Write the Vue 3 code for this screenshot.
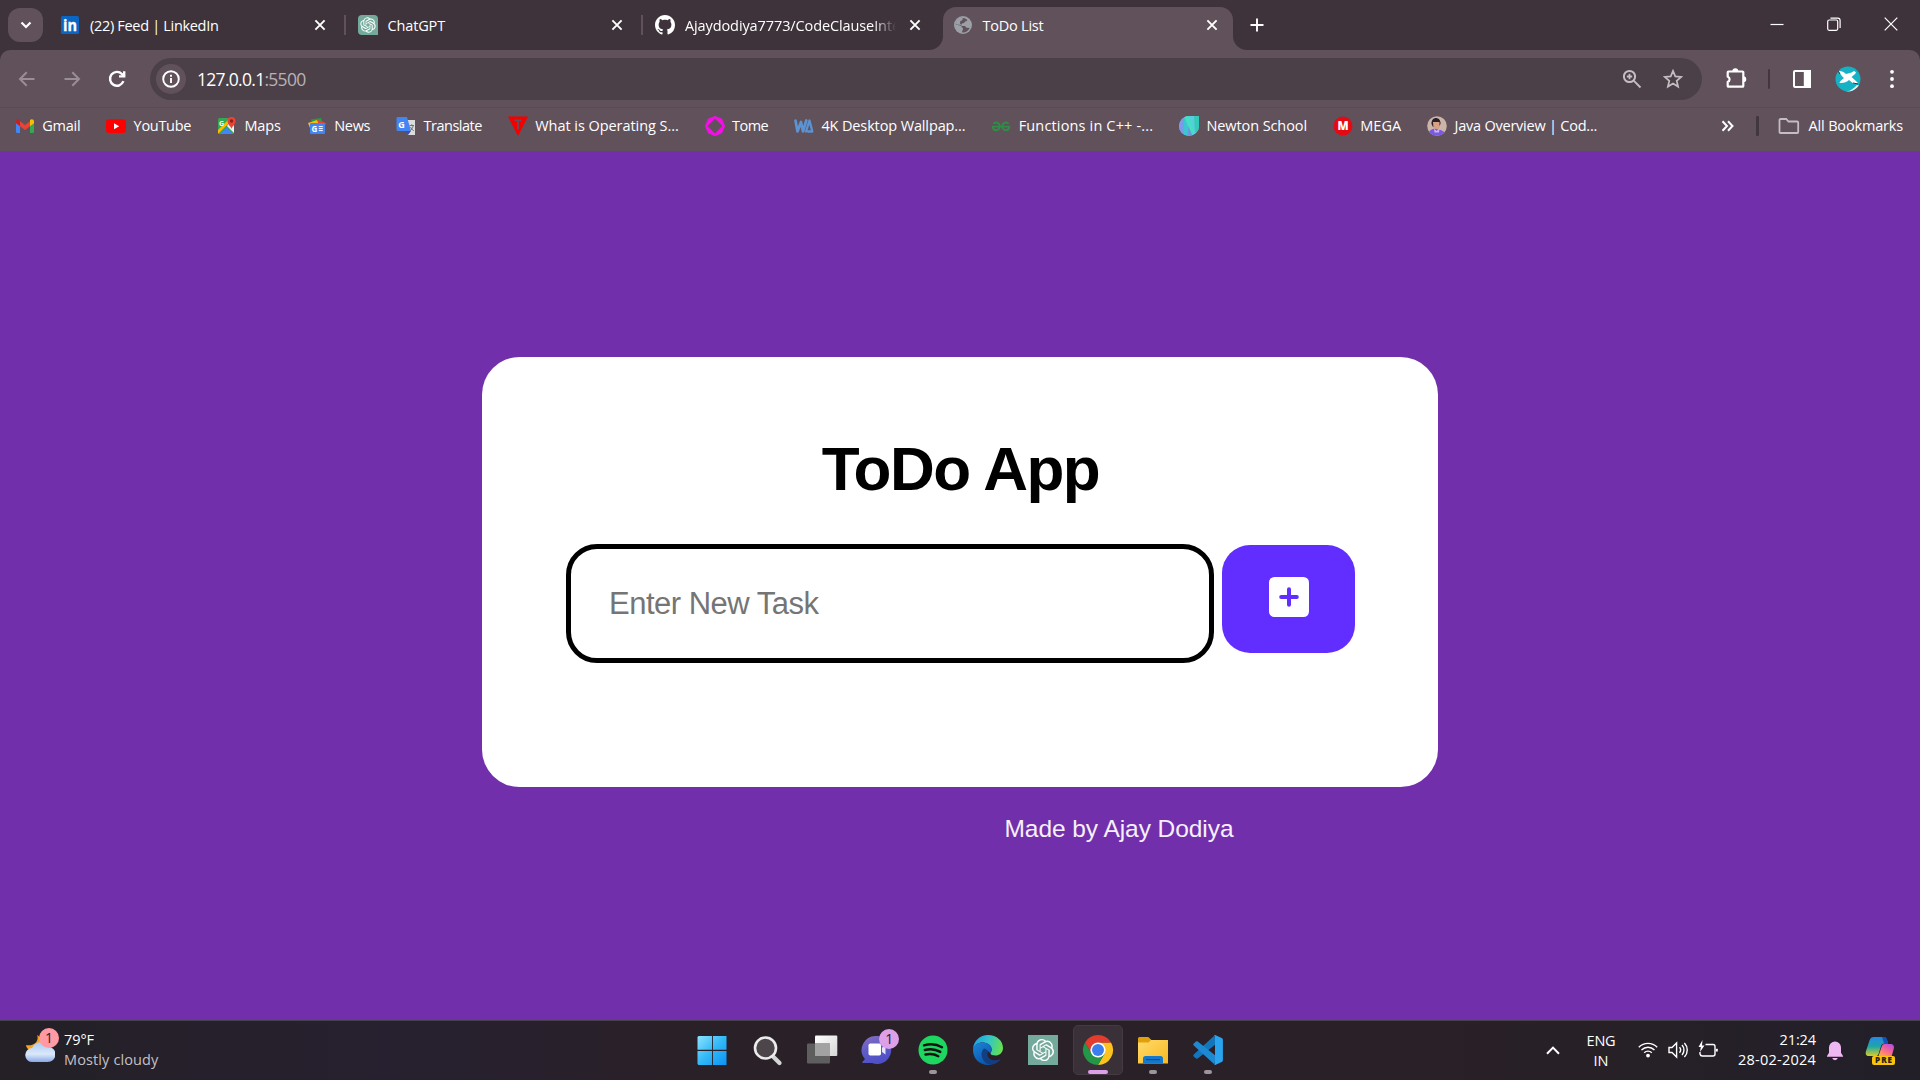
<script setup>
// Spreads or tightens the tracking of a label so that it fills a given width.
const vFit = {
  mounted(el, { value }) {
    if (!value) return
    el.style.letterSpacing = '0px'
    const range = document.createRange()
    range.selectNodeContents(el)
    const natural = range.getBoundingClientRect().width
    el.style.letterSpacing = (value - natural) / el.textContent.length + 'px'
  },
}

const knot =
  'M22.2819 9.8211a5.9847 5.9847 0 0 0-.5157-4.9108 6.0462 6.0462 0 0 0-6.5098-2.9A6.0651 6.0651 0 0 0 4.9807 4.1818a5.9847 5.9847 0 0 0-3.9977 2.9 6.0462 6.0462 0 0 0 .7427 7.0966 5.98 5.98 0 0 0 .511 4.9107 6.051 6.051 0 0 0 6.5146 2.9001A5.9847 5.9847 0 0 0 13.2599 24a6.0557 6.0557 0 0 0 5.7718-4.2058 5.9894 5.9894 0 0 0 3.9977-2.9001 6.0557 6.0557 0 0 0-.7475-7.0729zm-9.022 12.6081a4.4755 4.4755 0 0 1-2.8764-1.0408l.1419-.0804 4.7783-2.7582a.7948.7948 0 0 0 .3927-.6813v-6.7369l2.02 1.1686a.071.071 0 0 1 .038.052v5.5826a4.504 4.504 0 0 1-4.4945 4.4944zm-9.6607-4.1254a4.4708 4.4708 0 0 1-.5346-3.0137l.142.0852 4.783 2.7582a.7712.7712 0 0 0 .7806 0l5.8428-3.3685v2.3324a.0804.0804 0 0 1-.0332.0615L9.74 19.9502a4.4992 4.4992 0 0 1-6.1408-1.6464zM2.3408 7.8956a4.485 4.485 0 0 1 2.3655-1.9728V11.6a.7664.7664 0 0 0 .3879.6765l5.8144 3.3543-2.0201 1.1685a.0757.0757 0 0 1-.071 0l-4.8303-2.7865A4.504 4.504 0 0 1 2.3408 7.872zm16.5963 3.8558L13.1038 8.364 15.1192 7.2a.0757.0757 0 0 1 .071 0l4.8303 2.7913a4.4944 4.4944 0 0 1-.6765 8.1042v-5.6772a.79.79 0 0 0-.407-.667zm2.0107-3.0231l-.142-.0852-4.7735-2.7818a.7759.7759 0 0 0-.7854 0L9.409 9.2297V6.8974a.0662.0662 0 0 1 .0284-.0615l4.8303-2.7866a4.4992 4.4992 0 0 1 6.6802 4.66zM8.3065 12.863l-2.02-1.1638a.0804.0804 0 0 1-.038-.0567V6.0742a4.4992 4.4992 0 0 1 7.3757-3.4537l-.142.0805L8.704 5.459a.7948.7948 0 0 0-.3927.6813zm1.0976-2.3654l2.602-1.4998 2.6069 1.4998v2.9994l-2.5974 1.4997-2.6067-1.4997Z'

// 20 x 20 artwork for tabs and bookmarks
const small = {
  linkedin:
    '<rect x="1" y="1" width="18" height="18" rx="1.5" fill="#0a66c2"/><text x="10" y="15.8" text-anchor="middle" font-family="Open Sans, sans-serif" font-weight="700" font-size="16" textLength="14" lengthAdjust="spacingAndGlyphs" fill="#fff" stroke="#fff" stroke-width=".3">in</text>',
  chatgpt: `<path d="M4 0h12a4 4 0 0 1 4 4v16H4a4 4 0 0 1-4-4V4a4 4 0 0 1 4-4z" fill="#74aa9c"/><path transform="translate(2.3 2.3) scale(.642)" d="${knot}" fill="#fff"/>`,
  github:
    '<path transform="scale(1.25)" fill="#fff" d="M8 0C3.58 0 0 3.58 0 8c0 3.54 2.29 6.53 5.47 7.59.4.07.55-.17.55-.38 0-.19-.01-.82-.01-1.49-2.01.37-2.53-.49-2.69-.94-.09-.23-.48-.94-.82-1.13-.28-.15-.68-.52-.01-.53.63-.01 1.08.58 1.23.82.72 1.21 1.87.87 2.33.66.07-.52.28-.87.51-1.07-1.78-.2-3.64-.89-3.64-3.95 0-.87.31-1.59.82-2.15-.08-.2-.36-1.02.08-2.12 0 0 .67-.21 2.2.82.64-.18 1.32-.27 2-.27s1.36.09 2 .27c1.53-1.04 2.2-.82 2.2-.82.44 1.1.16 1.92.08 2.12.51.56.82 1.27.82 2.15 0 3.07-1.87 3.75-3.65 3.95.29.25.54.73.54 1.48 0 1.07-.01 1.93-.01 2.2 0 .21.15.46.55.38A8.01 8.01 0 0 0 16 8c0-4.42-3.58-8-8-8z"/>',
  globe:
    '<circle cx="10" cy="10" r="9" fill="#9aa0a6"/><path d="M8.2 2.8a7.4 7.4 0 0 0-5.6 6.6l4.4 1c1.5.2 1.7 1.2 1.9 2 .9.3 1.3.9 1.1 1.9l-1.2 3c3.6.5 6.6-1.5 7.9-4.4l-2.9-.1c-.9 0-1.4-.8-1.4-1.7l-3.9-.2c-.7-1.3.2-2.5 1.3-2.7l1.5-.3c.3-1.1 1-1.7 2.2-1.6l.9-1.3c-1.7-1.5-3.8-2.2-6.2-2.2z" fill="#61515b"/><path d="M8.4 2.5c1.5.1 1.9 1.8.7 2.7l-1.7.9-.5 2.1 1.3 1.8-4.9-.6-.9-1.7c.9-2.6 3.2-5 6-5.2z" fill="#9aa0a6"/>',
  gmail:
    '<path d="M1 5v10.500A1.300 1.300 0 0 0 2.300 17H5V8z" fill="#4285f4"/><path d="M19 5v10.500a1.300 1.300 0 0 1-1.300 1.500H15V8z" fill="#34a853"/><path d="M5 5.300l5 3.800 5-3.800v4.900l-5 3.800-5-3.800z" fill="#ea4335"/><path d="M1 5.500C1 3.400 3.300 2.700 4.700 3.800L5 4v6.200L1 7.200z" fill="#c5221f"/><path d="M19 5.500c0-2.100-2.300-2.800-3.700-1.700L15 4v6.200l4-3z" fill="#fbbc04"/>',
  youtube: '<rect y="3.300" width="20" height="13.700" rx="3" fill="#f00"/><path d="M8 7.200v6l5.200-3z" fill="#fff"/>',
  maps:
    '<clipPath id="mp"><rect x="1" y="2" width="16" height="16" rx="1.500"/></clipPath><g clip-path="url(#mp)"><path d="M1 2h16v16H1z" fill="#34a853"/><path d="M1 14 13 2h4L1 18z" fill="#fbbc04"/><path d="M10 10 17 17V8l-4-2z" fill="#f1f3f4"/><path d="M3 18 9.500 11.500 16 18z" fill="#4285f4"/></g><path d="M14.500 13c-.5-3-4-4-4-8a4 4 0 0 1 8 0c0 4-3.500 5-4 8z" fill="#ea4335"/><circle cx="14.500" cy="5" r="1.700" fill="#8c1f17"/><text x="2" y="9.500" font-family="Open Sans, sans-serif" font-size="7" font-weight="700" fill="#fff">G</text>',
  news:
    '<path d="M4 3.500 14 2l2 5H5z" fill="#1e9e4a"/><path d="M1 7l9-3 2 5-9 3z" fill="#fbbc04"/><path d="M11 4l8 3-2 5-6-2z" fill="#ea4335"/><rect x="3" y="7" width="15" height="11" rx="1.200" fill="#4285f4"/><text x="4.500" y="15.600" font-family="Open Sans, sans-serif" font-size="8" font-weight="700" fill="#fff">G</text><path d="M11.800 10.600h4M11.800 12.600h4M11.800 14.600h4" stroke="#fff" stroke-width="1"/>',
  translate:
    '<path d="M8 4h11v15H12z" fill="#dcdcdc"/><path d="M1.500 1H11l4 14H2a1.500 1.500 0 0 1-1.500-1.500v-11A1.500 1.500 0 0 1 1.500 1z" fill="#4285f4"/><path d="M9.500 15H15l-3 4z" fill="#2b52c0"/><text x="2.300" y="11.500" font-family="Open Sans, sans-serif" font-size="9" font-weight="700" fill="#fff">G</text><path d="M13.500 9.500h4.500M15.700 8.300v1.200M17.200 9.700c-.4 2.200-1.700 4-3 5M14.500 11c.7 1.700 2 3 3.300 3.800" stroke="#6d767e" stroke-width="1" fill="none"/>',
  tutor: '<path d="M0 .5h20L10 20z" fill="#f40000"/><path d="M6.500 4.300h7M10 4.300v9" stroke="#61515b" stroke-width="1.800"/>',
  tome:
    '<path d="M10 .6 16.600 3.400 19.400 10 16.600 16.600 10 19.400 3.400 16.600.6 10 3.400 3.400z" fill="#f40fe6" stroke="#f40fe6" stroke-width="1.200" stroke-linejoin="round"/><path d="M10 2.600 17.400 10 10 17.400 2.600 10z" fill="#61515b"/>',
  wallpaper:
    '<path d="M1.500 4.500 3.500 15.500 7 6l2 9.500L12.300 4.500" fill="none" stroke="#5b93d3" stroke-width="2.700" stroke-linejoin="round" stroke-linecap="round"/><path d="M12 15.500 15.500 4.500 18.300 15.500H14" fill="none" stroke="#5b93d3" stroke-width="2.300" stroke-linejoin="round" stroke-linecap="round"/>',
  geeks:
    '<path d="M2.600 8C3.500 5.600 8.600 5.800 8.600 10.300c0 5.200-6.600 5.200-6.800.3h16.400c-.2 4.900-6.800 4.900-6.800-.3 0-4.500 5.100-4.700 6-2.300" fill="none" stroke="#2f8d46" stroke-width="1.900"/>',
  newton:
    '<clipPath id="nw"><path d="M10 0h10v10A10 10 0 1 1 10 0z"/></clipPath><g clip-path="url(#nw)"><path d="M0 0h20v20H0z" fill="#5bcbe0"/><path d="M0 0h5v20H0z" fill="#7b9bea"/><path d="M5 0h4.500v20H5z" fill="#3ec5d2"/><path d="M5 0h5l6 18h-4z" fill="#43e0c2"/><path d="M9.500 10l4 10h-5z" fill="#6899df"/><path d="M15 0h5v16h-4z" fill="#35c9b8"/></g>',
  mega:
    '<circle cx="10" cy="10" r="9.500" fill="#e50914"/><text x="10" y="14" text-anchor="middle" font-family="Open Sans, sans-serif" font-size="11.500" font-weight="800" fill="#fff">M</text>',
  java:
    '<clipPath id="jv"><circle cx="10" cy="10" r="9.800"/></clipPath><g clip-path="url(#jv)"><path d="M0 0h20v20H0z" fill="#cdb4a8"/><path d="M4.500 8C4 0 14 0 13.500 8l-2 3H6z" fill="#2a2028"/><path d="M6 6h6.500v6l-3 2-3-2z" fill="#d9a083"/><path d="M1 20c0-5 4-8 8-7s9 1 10 7z" fill="#7a5ae0"/><path d="M7 12.500l2.500 2.500 3-2.500-.5 4H7.500z" fill="#c9b7f2"/></g>',
}

// 32 x 32 artwork for the taskbar
const large = {
  windows:
    '<defs><linearGradient id="wg" x1="0" y1="0" x2="1" y2="1"><stop offset="0" stop-color="#8be3ff"/><stop offset=".5" stop-color="#33b8f7"/><stop offset="1" stop-color="#0a93f5"/></linearGradient></defs><path d="M2.500 2h13.600v13.800H1.500V3zM17 2h13.500v13.800H17zM1.500 17h14.600v14H2.500l-1-1zM17 17h13.500v14H17z" fill="url(#wg)"/>',
  search:
    '<path d="M22 22.500 28.500 29" stroke="#d3d6d7" stroke-width="4.200" stroke-linecap="round"/><circle cx="14.500" cy="14" r="10.500" fill="#4c464b" stroke="#ececec" stroke-width="2.600"/>',
  taskview:
    '<defs><linearGradient id="tv" x1="0" y1="0" x2="1" y2="1"><stop offset="0" stop-color="#fff"/><stop offset="1" stop-color="#d6d6d6"/></linearGradient></defs><rect x="9" y="1.500" width="22.300" height="20.500" rx="1" fill="url(#tv)"/><rect x="1" y="9.500" width="23" height="20" rx="1" fill="#5e5e5e"/><path d="M9 9.500h15V22H9z" fill="#a2a2a2"/>',
  chat:
    '<defs><linearGradient id="cg" x1="0" y1="0" x2=".4" y2="1"><stop offset="0" stop-color="#8d6fc0"/><stop offset=".5" stop-color="#5f5cc6"/><stop offset="1" stop-color="#4f50c8"/></linearGradient></defs><path d="M16 2a14 14 0 1 1-5 27H2c-.8 0-.9-.8-.4-1.300L4 25A14 14 0 0 1 16 2z" fill="url(#cg)"/><rect x="7.500" y="9.500" width="12.500" height="12" rx="1.800" fill="#fff"/><path d="M21 13.800l3.500-2.800v9.600L21 18z" fill="#e6e4fb"/>',
  spotify:
    '<circle cx="16" cy="16" r="14.500" fill="#1ed760"/><path d="M7 11.300c6-1.700 13-1 18 1.900M7.800 16c5.200-1.400 11-.8 15.500 1.900M8.500 20.500c4.400-1 9-.5 12.800 1.700" fill="none" stroke="#111" stroke-width="2.400" stroke-linecap="round"/>',
  edge:
    '<defs><linearGradient id="e1" x1="0" y1=".3" x2="1" y2=".5"><stop offset="0" stop-color="#1f9fe4"/><stop offset=".5" stop-color="#32c5c9"/><stop offset="1" stop-color="#66e14d"/></linearGradient><linearGradient id="e2" x1="0" y1="0" x2=".6" y2="1"><stop offset="0" stop-color="#1b86d8"/><stop offset="1" stop-color="#0b55ab"/></linearGradient></defs><path d="M1 15C1.500 7 8 1 16 1c9 0 15 6 15 13 0 5-4 7.500-7.500 7.500-3 0-5-1-5-2.300 0-.9 1.200-1.300 1.200-3.700C19.700 11 15 8.500 10 8.500 6 8.500 2.500 11 1 15z" fill="url(#e1)"/><path d="M1 16c0-5 5-7.500 9.500-7.500 5 0 9.200 2.700 9.200 7 0 2.400-1.300 2.600-1.300 3.700-3-4-7.900-1.700-7.900 2.800 0 5 5.500 8.500 9.500 8.500-1.300.4-2.600.5-4 .5C7.500 31 1 24.500 1 16z" fill="url(#e2)"/><path d="M12 14.500c-5 4.500-2 13 5 16 4.500.8 9.500-2 11.700-5.500-5 2.500-12.300 1.500-13.200-4-.2-2 .7-3 1-3.500-1.500-1.700-3-2.700-4.500-3z" fill="#123f83"/>',
  chatgpt: `<path d="M1 1h30v30H1z" fill="#74aa9c"/><path transform="translate(4.900 4.900) scale(.925)" d="${knot}" fill="#fff"/>`,
  chrome:
    '<path d="M16 8.500h13A15 15 0 0 1 16 31l6.500-11.300z" fill="#fcc31e"/><path d="M16 8.500h13A15 15 0 0 0 3 8.500L9.500 19.700z" fill="#e33b2e"/><path d="M9.500 19.700 3 8.500A15 15 0 0 0 16 31l6.500-11.300z" fill="#239647"/><circle cx="16" cy="16" r="7.600" fill="#fff"/><circle cx="16" cy="16" r="6" fill="#3d7eee"/>',
  explorer:
    '<defs><linearGradient id="fg" x1="0" y1="0" x2="1" y2="1"><stop offset="0" stop-color="#ffdb6b"/><stop offset="1" stop-color="#f9b821"/></linearGradient></defs><path d="M1 4.500A1.500 1.500 0 0 1 2.500 3h8.800L14.500 6H31v7H1z" fill="#e0a00e"/><path d="M1 8.500h10.500L14 6h17v23.500H1z" fill="url(#fg)"/><path d="M6 29.500v-5A2.500 2.500 0 0 1 8.500 22h15a2.500 2.500 0 0 1 2.500 2.500v5z" fill="#1479cc"/><path d="M9 25.600h14" stroke="#0b4f92" stroke-width="1.200"/>',
  vscode:
    '<path d="M22.500 1.500 2 20.300c-1 1-.9 1.700 0 2.500l1.700 1.500c.7.600 1.500.5 2 .1L24 10z" fill="#1276bd"/><path d="M22.500 30.500 2 11.700c-1-1-.9-1.700 0-2.500l1.700-1.500c.7-.6 1.500-.5 2-.1L24 22z" fill="#1e89d0"/><path d="M22 30.800c.7.300 1.200.2 1.700 0l6-2.900c.8-.4 1.200-1 1.200-1.700V5.800c0-.8-.4-1.400-1.200-1.700l-6-2.900c-.8-.3-1.400-.1-2 .3.800-.3 1.300.2 1.300 1.200v26.600c0 1-.5 1.500-1 1.500z" fill="#2ba4ef"/>',
}

const tabs = [
  { icon: 'linkedin', title: '(22) Feed | LinkedIn', w: 128.5 },
  { icon: 'chatgpt', title: 'ChatGPT', w: 57.5 },
  { icon: 'github', title: 'Ajaydodiya7773/CodeClauseInte', w: 215, faded: true },
  { icon: 'globe', title: 'ToDo List', w: 61, active: true },
]

const bookmarks = [
  { icon: 'gmail', title: 'Gmail', w: 38 },
  { icon: 'youtube', title: 'YouTube', w: 57.5 },
  { icon: 'maps', title: 'Maps', w: 36.5 },
  { icon: 'news', title: 'News', w: 36 },
  { icon: 'translate', title: 'Translate', w: 58.5 },
  { icon: 'tutor', title: 'What is Operating S...', w: 143.5 },
  { icon: 'tome', title: 'Tome', w: 36 },
  { icon: 'wallpaper', title: '4K Desktop Wallpap...', w: 144 },
  { icon: 'geeks', title: 'Functions in C++ -...', w: 134.5 },
  { icon: 'newton', title: 'Newton School', w: 100.5 },
  { icon: 'mega', title: 'MEGA', w: 41 },
  { icon: 'java', title: 'Java Overview | Cod...', w: 142.5 },
]

const apps = [
  { icon: 'windows' },
  { icon: 'search' },
  { icon: 'taskview' },
  { icon: 'chat', badge: '1' },
  { icon: 'spotify', running: true },
  { icon: 'edge' },
  { icon: 'chatgpt' },
  { icon: 'chrome', active: true },
  { icon: 'explorer', running: true },
  { icon: 'vscode', running: true },
]
</script>

<template>
  <div class="screen">
    <header class="tabstrip">
      <button class="tab-search">
        <svg width="12" height="8" viewBox="0 0 12 8"><path d="M1.500 1.500 6 6l4.500-4.500" /></svg>
      </button>
      <div class="tabs">
        <div v-for="t in tabs" :key="t.title" class="tab" :class="{ active: t.active }">
          <svg class="fav" viewBox="0 0 20 20" v-html="small[t.icon]" />
          <span class="tab-title" :class="{ faded: t.faded }"><span v-fit="t.w">{{ t.title }}</span></span>
          <svg class="tab-close" viewBox="0 0 12 12"><path d="M1.400 1.400l9.200 9.200M10.600 1.400l-9.200 9.200" /></svg>
        </div>
      </div>
      <svg class="new-tab" viewBox="0 0 14 14"><path d="M7 .5v13M.5 7h13" /></svg>
      <div class="window-controls">
        <svg viewBox="0 0 14 14"><path d="M.5 7.500h13" /></svg>
        <svg viewBox="0 0 14 14">
          <rect x=".7" y="3" width="10" height="10.300" rx="1.500" />
          <path d="M3.500 1.200h7.300a2.300 2.300 0 0 1 2.300 2.300V11" />
        </svg>
        <svg viewBox="0 0 14 14"><path d="M.7.7l12.600 12.600M13.300.7.7 13.300" /></svg>
      </div>
    </header>

    <div class="chrome-body">
      <nav class="toolbar">
        <svg class="nav dim" viewBox="0 0 20 20"><path d="M17.500 10h-14M9.700 3.200 3 10l6.700 6.800" /></svg>
        <svg class="nav dim" viewBox="0 0 20 20"><path d="M2.500 10h14M10.300 3.200 17 10l-6.700 6.800" /></svg>
        <svg class="nav reload" viewBox="0 0 20 20">
          <path d="M16.400 12.200A6.900 6.900 0 1 1 14.900 5l1.500 1.500" />
          <path d="M17.200 2.200v5.200H12" />
        </svg>
        <div class="omnibox">
          <span class="info">
            <svg viewBox="0 0 18 18">
              <circle cx="9" cy="9" r="7.800" /><path d="M9 8v5" /><path d="M9 4.700v2" />
            </svg>
          </span>
          <span v-fit="108.5" class="url">127.0.0.1<span class="port">:5500</span></span>
          <svg class="zoomed" viewBox="0 0 20 20">
            <circle cx="7.500" cy="7.500" r="5.600" /><path d="M11.700 11.700 18.500 18.500M7.500 4.800v5.400M4.800 7.500h5.400" />
          </svg>
          <svg class="star" viewBox="0 0 20 20">
            <path d="M10 1.900l2.300 5.500 5.900.5-4.500 3.900 1.400 5.800-5.100-3.100-5.100 3.100 1.400-5.800L1.800 7.900l5.900-.5z" />
          </svg>
        </div>
        <svg class="ext" viewBox="0 0 22 22">
          <path d="M3.500 4.500h14a.8.8 0 0 1 .8.800v13.600a.8.8 0 0 1-.8.800h-14a.8.8 0 0 1-.8-.8v-4.200a2.600 2.600 0 0 0 0-5V5.300a.8.8 0 0 1 .8-.8z" />
          <path class="solid" d="M7.300 4.300a3 3 0 0 1 6 0zM18.300 9.200a3 3 0 0 1 0 6z" />
        </svg>
        <span class="divider thin" />
        <svg class="panel" viewBox="0 0 18 18">
          <rect x="1" y="1" width="16" height="16" rx="1" /><path d="M11.800 1H17v16h-5.200z" />
        </svg>
        <svg class="avatar" viewBox="0 0 26 26">
          <clipPath id="av"><circle cx="13" cy="13" r="12.500" /></clipPath>
          <g clip-path="url(#av)">
            <path d="M0 0h26v26H0z" fill="#15b2c6" />
            <path d="M10 26c6-1 9-4 12-7l4 1v6z" fill="#eaf6f4" />
            <path d="M4 5c3 .3 5 1 7 3 2.500-.5 5.500-1 8-3 1 .4 1.500 1 2 1.500-1 2-3 3.300-4.500 4.500 2 1.500 4 3.500 6.500 6-2 1-4 1-6-.5l-3-2.500c-2 2-6 3.500-9.500 3 0-2 2.500-3 4.500-5C7 10.500 5 8 4 5z" fill="#fff" />
            <path d="M3 5l2 3M18 17l5 1" stroke="#333" stroke-width="1" />
          </g>
        </svg>
        <svg class="dots" viewBox="0 0 4 20">
          <circle cx="2" cy="2.800" r="1.900" /><circle cx="2" cy="10" r="1.900" /><circle cx="2" cy="17.200" r="1.900" />
        </svg>
      </nav>

      <nav class="bookmarks">
        <div v-for="b in bookmarks" :key="b.title" class="bookmark">
          <svg class="fav" viewBox="0 0 20 20" v-html="small[b.icon]" />
          <span class="label" :style="{ width: b.w + 'px' }"><span v-fit="b.w">{{ b.title }}</span></span>
        </div>
        <svg class="more" viewBox="0 0 13 12"><path d="M1.500 1.200 6 6l-4.500 4.800M7 1.200 11.500 6 7 10.800" /></svg>
        <span class="divider" />
        <svg class="folder" viewBox="0 0 22 18">
          <path d="M2.500 2h5.700l2.300 2.500h8.700a1 1 0 0 1 1 1V15a1 1 0 0 1-1 1H2.500a1 1 0 0 1-1-1V3a1 1 0 0 1 1-1z" />
        </svg>
        <span class="all"><span v-fit="94.5">All Bookmarks</span></span>
      </nav>
    </div>

    <main class="page">
      <section class="card">
        <h1><span v-fit="277.5">ToDo App</span></h1>
        <div class="entry">
          <input type="text" placeholder="Enter New Task" />
          <button class="add">
            <svg viewBox="0 0 40 40">
              <rect width="40" height="40" rx="5.500" fill="#fff" />
              <path d="M20 12.200v15.600M12.200 20h15.600" stroke="#612eff" stroke-width="4" stroke-linecap="round" />
            </svg>
          </button>
        </div>
      </section>
      <p class="credit"><span v-fit="229">Made by Ajay Dodiya</span></p>
    </main>

    <footer class="taskbar">
      <div class="weather">
        <svg viewBox="0 4 32 32">
          <defs>
            <linearGradient id="cl" x1="0" y1="0" x2="0" y2="1">
              <stop offset="0" stop-color="#a9cbf5" /><stop offset=".6" stop-color="#dce8fa" /><stop offset="1" stop-color="#86a9e6" />
            </linearGradient>
          </defs>
          <path d="M13 6c2 6-2 12-12 11 1 5 6 7 12 5 6-3 7-12 0-16z" fill="#f5a21b" />
          <path d="M8 35a7.500 7.500 0 0 1-.5-15 9.500 9.500 0 0 1 17-1.500A8 8 0 0 1 24 35z" fill="url(#cl)" />
        </svg>
        <span class="badge pink">1</span>
        <div class="weather-text">
          <span class="temp"><span v-fit="30">79°F</span></span>
          <span class="sky"><span v-fit="94.5">Mostly cloudy</span></span>
        </div>
      </div>

      <div class="apps">
        <div v-for="(a, i) in apps" :key="i" class="app" :class="{ active: a.active }">
          <svg viewBox="0 0 32 32" v-html="large[a.icon]" />
          <span v-if="a.badge" class="badge lilac">{{ a.badge }}</span>
          <span v-if="a.running || a.active" class="indicator" />
        </div>
      </div>

      <div class="tray">
        <svg class="up" viewBox="0 0 14 9"><path d="M1 7.800 7 1.600l6 6.200" /></svg>
        <div class="lang"><span v-fit="29">ENG</span><span v-fit="15">IN</span></div>
        <svg class="sys" viewBox="0 0 20 20">
          <path d="M.8 7.200c5.200-5.100 13.200-5.100 18.400 0M3.500 10c3.700-3.700 9.300-3.700 13 0M6.200 12.800c2.200-2.200 5.400-2.200 7.600 0" />
          <circle cx="10" cy="15.600" r="1.900" class="solid" />
        </svg>
        <svg class="sys" viewBox="0 0 20 20">
          <path d="M1 7.500h3L8.600 3v14L4 12.500H1z" /><path d="M11.500 7.300c1.300 1.500 1.300 3.900 0 5.400M14 5c2.600 2.800 2.600 7.200 0 10M16.400 2.900c3.800 4 3.800 10.200 0 14.200" />
        </svg>
        <svg class="sys" viewBox="0 0 20 20">
          <path d="M7.500 4.500H15A2 2 0 0 1 17 6.500V14a2 2 0 0 1-2 2H4.500A2.500 2.500 0 0 1 2 14v-2" />
          <path d="M18.800 8.800v2.700" stroke-width="2" /><path class="solid" d="M4.500 0 .5 7h2.300L2 12 6.500 5.500H4z" />
        </svg>
        <div class="clock"><span v-fit="36.500">21:24</span><span v-fit="78">28-02-2024</span></div>
        <svg class="bell" viewBox="0 0 18 20">
          <path d="M9 .5a6 6 0 0 1 6 6v5.200l2 3.300v.8H1V15l2-3.300V6.500a6 6 0 0 1 6-6zM6.200 17h5.600a2.900 2.900 0 0 1-5.600 0z" />
        </svg>
        <svg class="copilot" viewBox="0 0 30 30">
          <defs>
            <linearGradient id="ca" x1="0" y1="0" x2="0" y2="1">
              <stop offset="0" stop-color="#2488e8" /><stop offset=".5" stop-color="#1fa6a5" /><stop offset="1" stop-color="#d9cc28" />
            </linearGradient>
            <linearGradient id="cb" x1="1" y1="0" x2=".3" y2="1">
              <stop offset="0" stop-color="#a64df0" /><stop offset=".5" stop-color="#f0609b" /><stop offset="1" stop-color="#ff9d5c" />
            </linearGradient>
          </defs>
          <path d="M9 1h9c2.500 0 3.500 1.500 4.300 4l.7 2.500h-3.500c-2 0-3 1-3.500 2.700L13.500 18c-.5 1.500-1.300 2-3 2H4c-3 0-3.800-2-3-5L4.500 4.500C5.300 2 6.500 1 9 1z" fill="url(#ca)" />
          <path d="M17 1h2c2 0 2.800 1.500 3.500 4l.7 2.500h-4z" fill="#1452b8" />
          <path d="M19.500 8H25c3.500 0 4.500 2 3.700 5l-2 7H13.500l3-9c.6-2 1.500-3 3-3z" fill="url(#cb)" />
          <rect x="7" y="20" width="23" height="9" rx="2" fill="#fcc30b" />
          <text x="18.500" y="27.400" text-anchor="middle" font-family="Open Sans, sans-serif" font-size="8" font-weight="800" fill="#222" textLength="17">PRE</text>
        </svg>
      </div>
    </footer>
  </div>
</template>

<style>
body {
  margin: 0;
  overflow: hidden;
}
</style>

<style scoped>
.screen {
  width: 1920px;
  height: 1080px;
  display: flex;
  flex-direction: column;
  overflow: hidden;
  background: #3e333a;
  color: #fff;
  font-family: "Open Sans", "Noto Sans", sans-serif;
  font-size: 14.5px;
  line-height: 20px;
}
svg {
  display: block;
  flex: none;
  fill: none;
}
button {
  border: 0;
  padding: 0;
  display: flex;
  align-items: center;
  justify-content: center;
}

/* tab strip */
.tabstrip {
  height: 50px;
  display: flex;
  flex: none;
}
.tab-search {
  width: 35px;
  height: 34px;
  margin: 8px 3px 0 8px;
  border-radius: 12px;
  background: #61515b;
}
.tab-search path {
  stroke: #fff;
  stroke-width: 2.2;
}
.tabs {
  display: flex;
}
.tab {
  box-sizing: border-box;
  width: 297.5px;
  height: 50px;
  padding: 0 0 0 14px;
  display: flex;
  align-items: center;
  position: relative;
}
.tab + .tab:not(.active)::before {
  content: "";
  position: absolute;
  left: 0;
  top: 15px;
  width: 2px;
  height: 20px;
  background: #61515b;
}
.tab.active {
  z-index: 0;
}
.tab.active::before {
  content: "";
  position: absolute;
  z-index: -1;
  left: 4.5px;
  right: 3px;
  top: 7px;
  bottom: 0;
  border-radius: 13px 13px 0 0;
  background: #61515b;
}
.tab.active::after {
  content: "";
  position: absolute;
  z-index: -1;
  left: -10px;
  right: -11px;
  bottom: 0;
  height: 14px;
  background:
    radial-gradient(circle at 0 0, transparent 13.5px, #61515b 14.5px) left / 14.5px 14px no-repeat,
    radial-gradient(circle at 100% 0, transparent 13.5px, #61515b 14.5px) right / 14px 14px no-repeat;
}
.fav {
  width: 20px;
  height: 20px;
}
.tab-title {
  width: 216px;
  height: 20px;
  padding-top: 1px;
  margin-left: 10px;
  white-space: nowrap;
}
.tab-title.faded {
  -webkit-mask-image: linear-gradient(90deg, #000 188px, transparent 211px);
  mask-image: linear-gradient(90deg, #000 188px, transparent 211px);
}
.tab-close {
  width: 12px;
  height: 12px;
  margin-left: 7.5px;
}
.tab-close path,
.new-tab path {
  stroke: #fff;
  stroke-width: 1.9;
}
.new-tab {
  width: 14px;
  height: 14px;
  margin: 18px 0 0 14px;
}
.window-controls {
  display: flex;
  gap: 43px;
  margin: 17px 22px 0 auto;
}
.window-controls svg {
  width: 14px;
  height: 14px;
  stroke: #fff;
  stroke-width: 1.2;
}

/* toolbar */
.chrome-body {
  flex: none;
  height: 101px;
  background: #61515b;
  border-radius: 10px 10px 0 0;
}
.toolbar {
  height: 58px;
  box-sizing: border-box;
  border-bottom: 1px solid #5a4b55;
  display: flex;
  align-items: center;
  padding: 1px 26px 0 17px;
}
.nav {
  width: 20px;
  height: 20px;
  stroke: #fff;
  stroke-width: 2;
  margin-right: 25px;
}
.nav.dim {
  stroke: #9a8d96;
}
.nav.reload {
  stroke-width: 2.4;
  margin-right: 23px;
}
.omnibox {
  width: 1552px;
  height: 42px;
  border-radius: 21px;
  background: #4c4048;
  display: flex;
  align-items: center;
  box-sizing: border-box;
  padding: 0 19.5px 0 6px;
}
.info {
  width: 30px;
  height: 30px;
  border-radius: 50%;
  background: #61515b;
  display: flex;
  align-items: center;
  justify-content: center;
  margin-right: 11px;
}
.info svg {
  width: 18px;
  height: 18px;
  stroke: #fff;
  stroke-width: 1.9;
}
.url {
  font-size: 17.5px;
  line-height: 24px;
  margin-right: auto;
}
.port {
  color: #b9b1b6;
}
.zoomed,
.star {
  width: 20px;
  height: 20px;
  stroke: #c4bec2;
  stroke-width: 2;
}
.zoomed path {
  stroke-width: 1.8;
}
.star {
  stroke-width: 1.7;
  margin-left: 20.5px;
}
.ext {
  width: 22px;
  height: 22px;
  margin: -2px 0 0 23px;
  stroke: #fff;
  stroke-width: 2.2;
  stroke-linejoin: round;
}
.ext .solid {
  fill: #fff;
  stroke: none;
}
.divider {
  width: 3px;
  height: 20px;
  background: #43373f;
  border-radius: 1px;
}
.divider.thin {
  width: 2px;
  margin: 0 23px 0 21px;
}
.panel {
  width: 18px;
  height: 18px;
  stroke: #fff;
  stroke-width: 2;
}
.panel path {
  fill: #fff;
}
.avatar {
  width: 26px;
  height: 26px;
  margin-left: 23.5px;
}
.dots {
  width: 4px;
  height: 20px;
  margin-left: auto;
  fill: #fff;
}

/* bookmarks bar */
.bookmarks {
  height: 36px;
  display: flex;
  align-items: center;
  padding-left: 15px;
}
.bookmark {
  display: flex;
  align-items: center;
  margin-right: 26px;
}
.label {
  margin-left: 7.3px;
  height: 21px;
  white-space: nowrap;
}
.more {
  width: 13px;
  height: 12px;
  margin-left: 98px;
  stroke: #fff;
  stroke-width: 2;
}
.bookmarks .divider {
  margin: 0 19px 0 22px;
}
.folder {
  width: 22px;
  height: 18px;
  stroke: #c4bec2;
  stroke-width: 1.8;
}
.all {
  margin-left: 8.5px;
  height: 21px;
  white-space: nowrap;
}

/* page */
.page {
  flex: 1;
  background: #722fac;
  font-family: "Liberation Sans", Arial, sans-serif;
}
.card {
  box-sizing: border-box;
  width: 956px;
  height: 430px;
  margin: 206px auto 0;
  padding: 79px 83px 0 84px;
  border-radius: 37.5px;
  background: #fff;
}
h1 {
  margin: 0;
  color: #000;
  font-size: 62px;
  line-height: 65px;
  height: 68px;
  text-align: center;
}
.entry {
  margin-top: 40px;
  display: flex;
  gap: 8px;
  align-items: flex-start;
}
input {
  box-sizing: border-box;
  width: 648px;
  height: 119px;
  border: 5px solid #000;
  border-radius: 31px;
  padding: 1px 38px 0;
  background: #fff;
  font: 31px "Liberation Sans", Arial, sans-serif;
  letter-spacing: -0.5px;
  outline: none;
}
input::placeholder {
  color: #757575;
  opacity: 1;
}
.add {
  width: 133px;
  height: 108px;
  margin-top: 1px;
  border-radius: 28px;
  background: #612eff;
}
.add svg {
  width: 40px;
  height: 40px;
  margin-bottom: 4px;
}
.credit {
  margin: 28px 0 0 1004.5px;
  font-size: 24.5px;
  line-height: 28px;
  color: #f6f0fa;
  white-space: nowrap;
}

/* taskbar */
.taskbar {
  box-sizing: border-box;
  height: 60px;
  flex: none;
  border-top: 1px solid #48414c;
  background: linear-gradient(90deg, #242026, #272030 20%, #2a2027 38%, #2a2027 75%, #252028 90%, #221f29);
  display: flex;
}
.weather {
  box-sizing: border-box;
  width: 686.8px;
  display: flex;
  position: relative;
  padding-left: 25px;
}
.weather > svg {
  width: 30px;
  height: 30px;
  margin-top: 12px;
}
.badge {
  position: absolute;
  width: 20px;
  height: 20px;
  border-radius: 50%;
  text-align: center;
  font-size: 14px;
  line-height: 20px;
  color: #2b1c26;
}
.badge.pink {
  left: 39px;
  top: 7px;
  background: #ff99a4;
}
.badge.lilac {
  left: 26px;
  top: 3px;
  background: #dd9fe8;
}
.weather-text {
  display: flex;
  flex-direction: column;
  margin: 9px 0 0 9px;
  white-space: nowrap;
}
.sky {
  color: #c4c0c5;
}
.apps {
  display: flex;
  gap: 5.2px;
}
.app {
  box-sizing: border-box;
  width: 50px;
  height: 50px;
  margin-top: 4px;
  border-radius: 5px;
  border: 1px solid transparent;
  position: relative;
  display: flex;
  justify-content: center;
  padding-top: 8px;
}
.app svg {
  width: 32px;
  height: 32px;
}
.app.active {
  background: #3a3037;
  border-color: #443a41;
}
.indicator {
  position: absolute;
  bottom: 0;
  left: 20px;
  width: 8px;
  height: 4px;
  border-radius: 2px;
  background: #9c969a;
}
.active .indicator {
  left: 14px;
  width: 20px;
  background: #dd9fe8;
}
.tray {
  margin-left: auto;
  display: flex;
  align-items: flex-start;
  padding-right: 25px;
}
.up {
  width: 14px;
  height: 9px;
  margin-top: 25px;
  stroke: #fff;
  stroke-width: 2;
}
.lang {
  width: 30px;
  margin: 10px 22px 0 26px;
  display: flex;
  flex-direction: column;
  align-items: center;
}
.sys {
  width: 20px;
  height: 20px;
  margin: 19px 10px 0 0;
  stroke: #fff;
  stroke-width: 1.4;
}
.sys .solid {
  fill: #fff;
  stroke: none;
}
.clock {
  width: 80px;
  margin-top: 9px;
  padding-left: 8px;
  display: flex;
  flex-direction: column;
  align-items: flex-end;
}
.bell {
  width: 18px;
  height: 20px;
  margin: 20px 21px 0 10px;
  fill: #efb8f2;
}
.copilot {
  width: 30px;
  height: 30px;
  margin-top: 15px;
}
</style>
